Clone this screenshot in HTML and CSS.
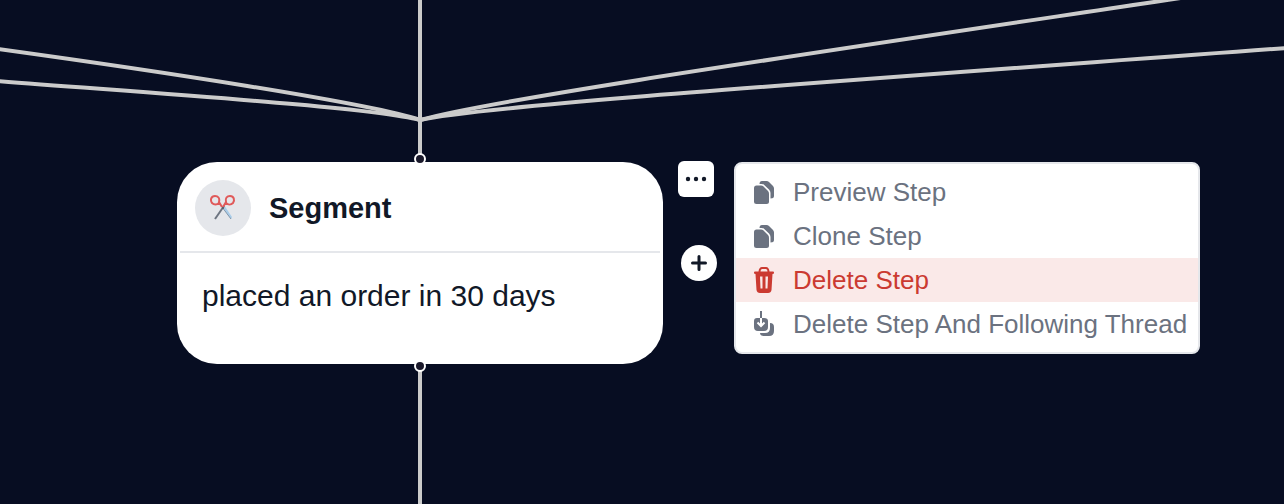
FILE: index.html
```html
<!DOCTYPE html>
<html lang="en">
<head>
    <meta charset="UTF-8">
    <meta name="viewport" content="width=device-width, initial-scale=1.0">
    <title>Journey builder</title>
    <link rel="stylesheet" href="styles.css">
</head>
<body>
    <main class="canvas">
        <svg class="edges" width="1284" height="504" viewBox="0 0 1284 504" aria-hidden="true">
            <path d="M420 0V160"/>
            <path d="M420 366V504"/>
            <path d="M-2 49C150 70 370 103 420 120"/>
            <path d="M-2 81C150 93 370 107 420 120"/>
            <path d="M420 120C490 100 800 55 1194 -4"/>
            <path d="M420 120C480 106 800 84 1286 48"/>
        </svg>

        <article class="node">
            <header class="node-header">
                <span class="node-icon">
                    <svg width="26" height="28" viewBox="0 0 26 28" fill="none" aria-hidden="true">
                        <path d="M12 12L14 11L22 23L21 25Z" fill="#a9cdea"/>
                        <path d="M12 13L21 25" stroke="#7f95aa" stroke-width="1"/>
                        <path d="M14 12L5 25" stroke="#6d7581" stroke-width="2"/>
                        <path d="M12 13L9 8C10 4 8 2 5 2C1 2 0 6 2 9C4 11 7 11 9 9" stroke="#e05a5a" stroke-width="2"/>
                        <path d="M13 13L16 8C15 4 17 2 20 2C24 2 25 6 23 9C21 11 18 11 16 9" stroke="#e05a5a" stroke-width="2"/>
                        <circle cx="13" cy="14" r="1" fill="#555d69"/>
                    </svg>
                </span>
                <h2 class="node-title">Segment</h2>
            </header>
            <p class="node-text">placed an order in 30 days</p>
            <span class="handle handle-top"></span>
            <span class="handle handle-bottom"></span>
        </article>

        <div class="actions">
            <button class="more-button" type="button" aria-label="Step options">
                <svg width="22" height="6" viewBox="0 0 22 6" fill="currentColor" aria-hidden="true">
                    <circle cx="3" cy="3" r="2.2"/>
                    <circle cx="11" cy="3" r="2.2"/>
                    <circle cx="19" cy="3" r="2.2"/>
                </svg>
            </button>
            <button class="add-button" type="button" aria-label="Add step">
                <svg width="16" height="16" viewBox="0 0 16 16" fill="none" stroke="currentColor" stroke-width="3" stroke-linecap="round" aria-hidden="true">
                    <path d="M8 1.5V14.5M1.5 8H14.5"/>
                </svg>
            </button>
        </div>

        <div class="menu">
            <button class="menu-item" type="button">
                <svg class="menu-icon" viewBox="0 0 24 28" aria-hidden="true">
                    <path d="M7.5 6Q7.5 3 10 3H14.5Q16 3 17 4L21 8Q22 9 22 10.500V18Q22 20.500 18.500 20.500V15Q18.500 13 17 11.500L12.500 7.200Q11.500 6 9.500 6Z"/>
                    <path d="M4.500 7.500H9Q10.500 7.500 11.500 8.500L16 13Q17 14 17 15.500V23.500Q17 26 14.500 26H4.500Q2 26 2 23.500V10Q2 7.500 4.500 7.500Z"/>
                </svg>
                Preview Step
            </button>
            <button class="menu-item" type="button">
                <svg class="menu-icon" viewBox="0 0 24 28" aria-hidden="true">
                    <path d="M7.5 6Q7.5 3 10 3H14.5Q16 3 17 4L21 8Q22 9 22 10.500V18Q22 20.500 18.500 20.500V15Q18.500 13 17 11.500L12.500 7.200Q11.500 6 9.500 6Z"/>
                    <path d="M4.500 7.500H9Q10.500 7.500 11.500 8.500L16 13Q17 14 17 15.500V23.500Q17 26 14.500 26H4.500Q2 26 2 23.500V10Q2 7.500 4.500 7.500Z"/>
                </svg>
                Clone Step
            </button>
            <button class="menu-item menu-item-danger" type="button">
                <svg class="menu-icon" viewBox="0 0 24 28" aria-hidden="true">
                    <path fill-rule="evenodd" d="M6.500 5.500Q7 1 10 1H14Q17 1 17.500 5.500H21Q22 5.500 22 6.500V7Q22 8 20.500 8L19.500 24Q19 27 16 27H8Q5 27 4.500 24L3.500 8Q2 8 2 7V6.500Q2 5.500 3 5.500ZM8.500 5.500H15.500Q15.500 3 14 3H10Q8.500 3 8.500 5.500ZM8 10.500L8.500 22.500H10.500V10.500ZM13.500 10.500V22.500H15.500L16 10.500Z"/>
                </svg>
                Delete Step
            </button>
            <button class="menu-item" type="button">
                <svg class="menu-icon" viewBox="0 0 24 28" aria-hidden="true">
                    <path d="M8 1H10V8H12Q16 8 16 11V17Q16 21 12 21H6Q2 21 2 17V11Q2 8 5 8H8Z"/>
                    <path class="menu-icon-arrow" d="M9 8V16M5.500 12.500L9 16L12.500 12.500"/>
                    <path d="M18 13Q22 13 22 17V21Q22 26 17 26H12Q8 26 8 23H13Q18 23 18 18Z"/>
                </svg>
                Delete Step And Following Thread
            </button>
        </div>
    </main>
</body>
</html>
```
FILE: styles.css
```css
* {
    margin: 0;
    padding: 0;
    box-sizing: border-box;
}
body {
    font-family: "Liberation Sans", Arial, sans-serif;
    background-color: #070d22;
    color: #111827;
}
button {
    font: inherit;
    border: none;
    cursor: pointer;
}
.canvas {
    position: relative;
    min-height: 100vh;
    overflow: hidden;
}

/* Connections between steps */
.edges {
    position: absolute;
    top: 0;
    left: 0;
    fill: none;
    stroke: #cbcbcb;
    stroke-width: 4;
}

/* Step card */
.node {
    position: absolute;
    top: 162px;
    left: 177px;
    width: 486px;
    padding: 0 3px 49px;
    background-color: #ffffff;
    border-radius: 40px;
}
.node-header {
    display: flex;
    align-items: center;
    gap: 18px;
    padding: 18px 15px 15px;
    border-bottom: 2px solid #e5e7eb;
}
.node-icon {
    display: flex;
    align-items: center;
    justify-content: center;
    width: 56px;
    height: 56px;
    background-color: #e5e7eb;
    border-radius: 50%;
}
.node-title {
    font-size: 29px;
    line-height: 40px;
}
.node-text {
    padding: 24px 22px 0;
    font-size: 30px;
    line-height: 38px;
}
.handle {
    position: absolute;
    left: 50%;
    width: 12px;
    height: 12px;
    background-color: #1a192b;
    border: 2px solid #ffffff;
    border-radius: 50%;
    transform: translateX(-50%);
}
.handle-top {
    top: -9px;
}
.handle-bottom {
    bottom: -8px;
}

/* Buttons beside the card */
.actions {
    position: absolute;
    top: 161px;
    left: 678px;
    display: flex;
    flex-direction: column;
    gap: 48px;
}
.more-button,
.add-button {
    display: flex;
    align-items: center;
    justify-content: center;
    width: 36px;
    height: 36px;
    background-color: #ffffff;
    color: #111827;
}
.more-button {
    border-radius: 6px;
}
.add-button {
    margin-left: 3px;
    border-radius: 50%;
}

/* Step menu */
.menu {
    position: absolute;
    top: 162px;
    left: 734px;
    width: 466px;
    padding: 6px 0;
    background-color: #ffffff;
    border: 2px solid #e5e7eb;
    border-radius: 8px;
}
.menu-item {
    display: flex;
    align-items: center;
    gap: 17px;
    width: 100%;
    height: 44px;
    padding: 0 16px;
    background-color: transparent;
    color: #6b7280;
    font-size: 26px;
    white-space: nowrap;
}
.menu-item-danger {
    background-color: #fae9e8;
    color: #cb3a31;
}
.menu-icon {
    flex: none;
    width: 24px;
    height: 28px;
    fill: currentColor;
}
.menu-icon-arrow {
    fill: none;
    stroke: #ffffff;
    stroke-width: 2;
}
```
